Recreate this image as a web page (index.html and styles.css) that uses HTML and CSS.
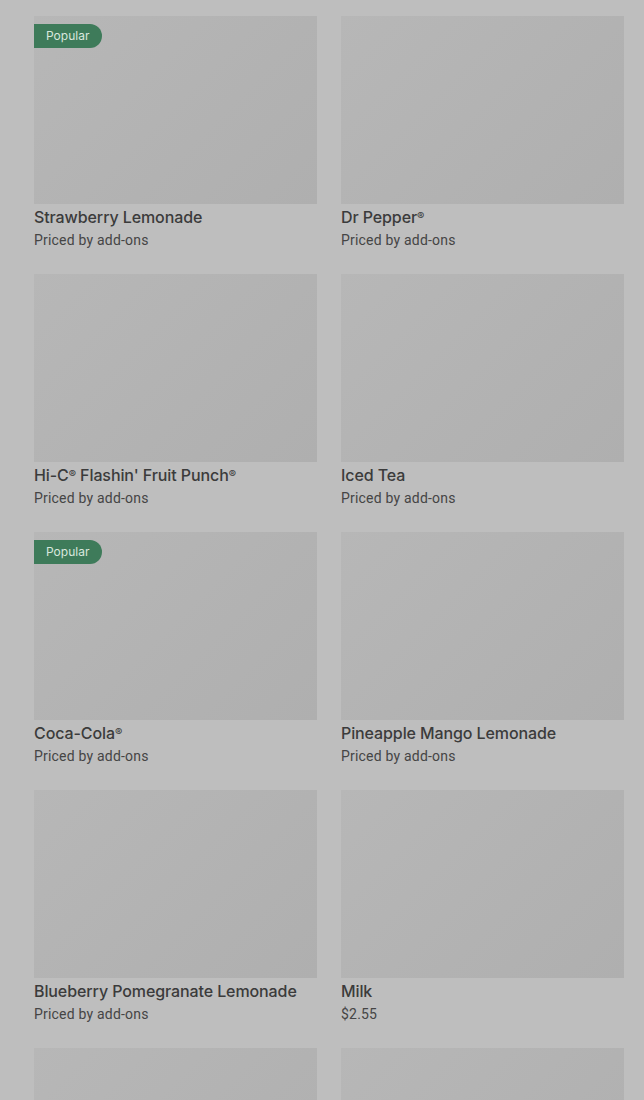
FILE: index.html
```html
<!DOCTYPE html>
<html>
<head>
<meta charset="utf-8">
<link rel="stylesheet" href="styles.css">
</head>
<body>
<div class="grid">
  <div class="card"><div class="img"><span class="badge">Popular</span></div><div class="title">Strawberry Lemonade</div><div class="sub">Priced by add-ons</div></div>
  <div class="card"><div class="img"></div><div class="title">Dr Pepper<span class="reg">®</span></div><div class="sub">Priced by add-ons</div></div>
  <div class="card"><div class="img"></div><div class="title">Hi-C<span class="reg">®</span> Flashin' Fruit Punch<span class="reg">®</span></div><div class="sub">Priced by add-ons</div></div>
  <div class="card"><div class="img"></div><div class="title">Iced Tea</div><div class="sub">Priced by add-ons</div></div>
  <div class="card"><div class="img"><span class="badge">Popular</span></div><div class="title">Coca-Cola<span class="reg">®</span></div><div class="sub">Priced by add-ons</div></div>
  <div class="card"><div class="img"></div><div class="title">Pineapple Mango Lemonade</div><div class="sub">Priced by add-ons</div></div>
  <div class="card"><div class="img"></div><div class="title">Blueberry Pomegranate Lemonade</div><div class="sub">Priced by add-ons</div></div>
  <div class="card"><div class="img"></div><div class="title">Milk</div><div class="sub">$2.55</div></div>
  <div class="card"><div class="img"></div></div>
  <div class="card"><div class="img"></div></div>
</div>
</body>
</html>
```
FILE: styles.css
```css
html, body {
  margin: 0;
  padding: 0;
  background: #bebebe;
  height: 1100px;
  overflow: hidden;
}
body {
  font-family: Inter, "Noto Sans", sans-serif;
}
.grid {
  display: grid;
  grid-template-columns: 283px 283px;
  column-gap: 24px;
  row-gap: 24px;
  padding: 16px 20px 0 34px;
}
.card {
  display: flex;
  flex-direction: column;
}
.img {
  position: relative;
  height: 188px;
  background: linear-gradient(135deg, #b7b7b7 0%, #b2b2b2 60%, #afafaf 100%);
}
.badge {
  position: absolute;
  left: 0;
  top: 8px;
  height: 24px;
  line-height: 24px;
  padding: 0 13px 0 12px;
  background: #3e7b5a;
  color: #d9e7de;
  font-size: 12px;
  border-radius: 0 12px 12px 0;
}
.title {
  margin-top: 1px;
  font-size: 16px;
  line-height: 24px;
  font-weight: 500;
  color: #3b3b3b;
  letter-spacing: -0.1px;
}
.reg {
  font-size: 11px;
  vertical-align: 3px;
  line-height: 0;
}
.sub {
  font-family: Roboto, "Noto Sans", sans-serif;
  font-size: 14px;
  line-height: 20px;
  padding-top: 1px;
  letter-spacing: 0.2px;
  color: #454545;
}
```
